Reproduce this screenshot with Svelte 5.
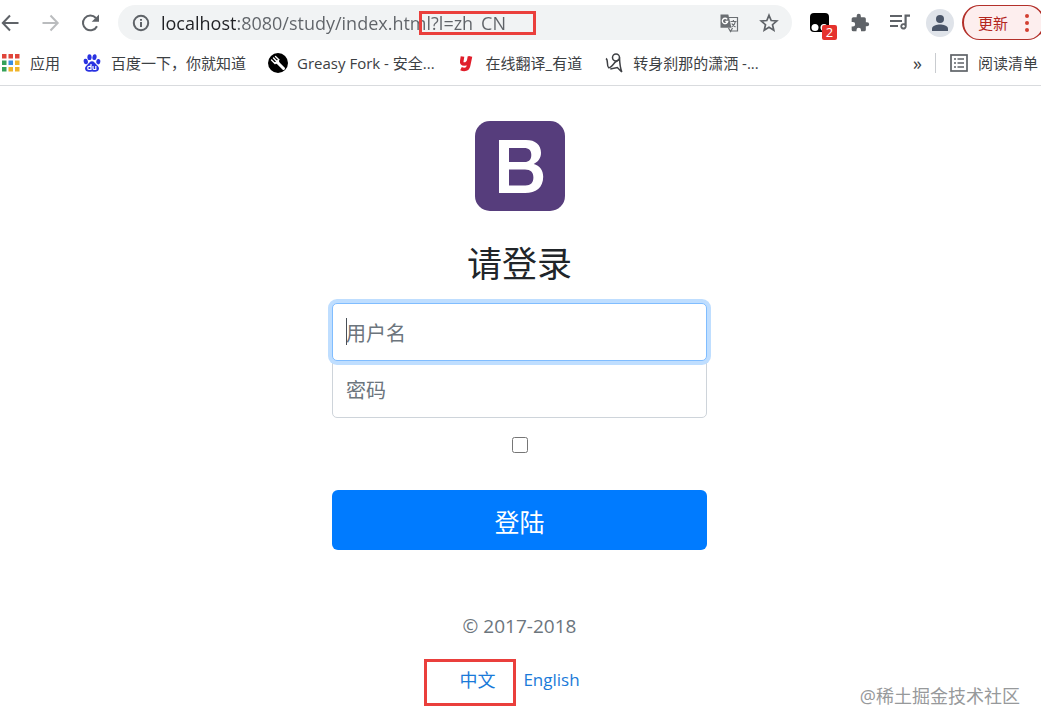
<script lang="ts">
	type Bookmark = { icon: string; title: string };

	const bookmarks: Bookmark[] = [
		{ icon: 'apps', title: '应用' },
		{ icon: 'baidu', title: '百度一下，你就知道' },
		{ icon: 'fork', title: 'Greasy Fork - 安全...' },
		{ icon: 'youdao', title: '在线翻译_有道' },
		{ icon: 'swirl', title: '转身刹那的潇洒 -...' }
	];

	const appColors = [
		'#e0453a', '#e0453a', '#e0453a',
		'#35a15a', '#3b8de0', '#f0b429',
		'#35a15a', '#f0b429', '#f0b429'
	];

	let url = $state('localhost:8080/study/index.html?l=zh_CN');
	let username = $state('');
	let password = $state('');
	let remember = $state(false);
</script>

<svelte:head>
	<title>请登录</title>
</svelte:head>

<header class="browser">
	<div class="toolbar">
		<nav class="history" aria-label="History">
			<button class="icon-button" aria-label="Back">
				<svg viewBox="0 0 20 20" fill="none" stroke="#5f6368" stroke-width="2">
					<path d="M18.500 10H3M10 2.500 2.800 10l7.200 7.500" />
				</svg>
			</button>
			<button class="icon-button" aria-label="Forward">
				<svg viewBox="0 0 20 20" fill="none" stroke="#babcbe" stroke-width="2">
					<path d="M2.500 10H17M10.500 2.500 17.700 10l-7.200 7.500" />
				</svg>
			</button>
			<button class="icon-button" aria-label="Reload">
				<svg viewBox="0 0 20 20">
					<path d="M17 13.200A7.400 7.400 0 1 1 15.900 5" fill="none" stroke="#5f6368" stroke-width="2" />
					<path d="M19 1.500v7.300h-7.300z" fill="#5f6368" />
				</svg>
			</button>
		</nav>

		<div class="omnibox">
			<svg class="info" viewBox="0 0 18 18">
				<circle cx="9" cy="9" r="7.200" fill="none" stroke="#5f6368" stroke-width="2" />
				<path d="M8 8h2v5H8zM8 5h2v1.800H8z" fill="#5f6368" />
			</svg>
			<input class="url" type="text" aria-label="Address" spellcheck="false" bind:value={url} />
			<button class="icon-button" aria-label="Translate">
				<svg viewBox="0 0 20 20">
					<path d="M9 4.500h9.500v13.500H11" fill="#f1f3f4" stroke="#6b6f73" stroke-width="1.200" />
					<path d="M1.500 1.500h7.800l3.200 13.200h-11z" fill="#6b6f73" />
					<path d="M8.200 6.300a2.700 2.700 0 1 0 .500 2.200H6.300" fill="none" stroke="#fff" stroke-width="1.300" />
					<path d="M11.500 8.500h6M14.400 7v1.500M16.400 8.500c-.4 2.500-2 4.300-3.600 5.300M12.800 10.500c1 1.700 2.200 2.700 3.700 3.500M9.500 15l2 3.500 2-3.500" fill="none" stroke="#6b6f73" stroke-width="1.200" />
				</svg>
			</button>
			<button class="icon-button" aria-label="Bookmark this page">
				<svg viewBox="0 0 20 20" fill="none" stroke="#5f6368" stroke-width="1.700">
					<path d="m10 2.300 2.200 5.200 5.600.500-4.300 3.700 1.300 5.500-4.800-2.900-4.800 2.900 1.300-5.500L2.200 8l5.600-.500z" />
				</svg>
			</button>
			<span class="mark mark-url"></span>
		</div>

		<div class="extensions">
			<button class="icon-button tamper" aria-label="Extension">
				<svg viewBox="0 0 20 20">
					<rect x="0" y="0" width="19" height="19" rx="4" />
					<circle cx="5" cy="14.500" r="3.500" fill="#fff" />
					<circle cx="14" cy="14.500" r="3.500" fill="#fff" />
				</svg>
				<span class="badge">2</span>
			</button>
			<button class="icon-button" aria-label="Extensions">
				<svg viewBox="0 0 24 24" fill="#5f6368">
					<path d="M20.500 11H19V7a2 2 0 0 0-2-2h-4V3.500a2.500 2.500 0 0 0-5 0V5H4a2 2 0 0 0-2 2v3.800h1.500a2.700 2.700 0 0 1 0 5.400H2V20a2 2 0 0 0 2 2h3.800v-1.500a2.700 2.700 0 0 1 5.400 0V22H17a2 2 0 0 0 2-2v-4h1.500a2.500 2.500 0 0 0 0-5z" />
				</svg>
			</button>
			<button class="icon-button" aria-label="Media controls">
				<svg viewBox="0 0 20 20" fill="#5f6368">
					<path d="M0 2h12v2H0zM0 7h12v2H0zM0 12h8v2H0zM14.500 1.500H20v2.200h-3.300v9.600a3.200 3.200 0 1 1-2.200-3z" />
					<circle cx="13.500" cy="13.200" r="1.200" fill="#fff" />
				</svg>
			</button>
			<button class="avatar" aria-label="Profile">
				<svg viewBox="0 0 28 28" fill="#4a5568">
					<circle cx="14" cy="10" r="4" />
					<path d="M6 22v-2.500C6 16.700 11 15.500 14 15.500s8 1.200 8 4V22z" />
				</svg>
			</button>
			<button class="update">
				更新
				<svg viewBox="0 0 4 18" fill="#d23f31">
					<circle cx="2" cy="2" r="2" />
					<circle cx="2" cy="9" r="2" />
					<circle cx="2" cy="16" r="2" />
				</svg>
			</button>
		</div>
	</div>

	<nav class="bookmarks" aria-label="Bookmarks">
		{#each bookmarks as { icon, title }}
			<a class="bookmark" href="#{icon}">
				<svg viewBox="0 0 20 20">
					{#if icon === 'apps'}
						{#each appColors as color, i}
							<rect x={1 + (i % 3) * 6.5} y={1 + Math.floor(i / 3) * 6.5} width="4.500" height="4.500" fill={color} />
						{/each}
					{:else if icon === 'baidu'}
						<g fill="#2932e1">
							<ellipse cx="3.800" cy="8.500" rx="2.100" ry="2.800" transform="rotate(-12 3.800 8.500)" />
							<ellipse cx="7.500" cy="4.200" rx="2.100" ry="2.900" />
							<ellipse cx="12.500" cy="4.200" rx="2.100" ry="2.900" transform="rotate(8 12.500 4.200)" />
							<ellipse cx="16.300" cy="8.700" rx="2.100" ry="2.700" transform="rotate(10 16.300 8.700)" />
							<path d="M10 8.300c2.200 0 3 2 4.600 3.500 2 1.700 3 3.200 2 5.300-1.200 2.300-3.800 1.700-6.600 1.400-2.800.300-5.400.900-6.600-1.400-1-2.100 0-3.600 2-5.300C7 10.300 7.800 8.300 10 8.300z" />
						</g>
						<path d="M9 11v5.500H7.300a1.500 1.500 0 0 1 0-3.200H9M11 13v2.200c0 .900.300 1.300 1.200 1.300h1.600V13" fill="none" stroke="#fff" stroke-width="1.200" />
					{:else if icon === 'fork'}
						<circle cx="10" cy="10" r="10" />
						<path d="m9.500 9.500 6 6" stroke="#fff" stroke-width="3" stroke-linecap="round" />
						<path d="M3.500 7 7 10.500l3.800-3.800L7.500 3.500M5.500 5 9 8.700" fill="none" stroke="#fff" stroke-width="1.400" stroke-linecap="round" />
						<path d="m7 10.500 3.800-3.800.800 4.400z" fill="#fff" />
					{:else if icon === 'youdao'}
						<path d="M5.500 3.500 4.800 8c-.4 2.300.7 3 2.300 3 2.500 0 4.300-1.500 4.800-4.300l.600-3.200M13.500 3.500l-2 9.500c-.5 2.600-2 3.500-4.200 3.500-1.300 0-2.300-.3-3.300-.8" fill="none" stroke="#e01e2b" stroke-width="3.600" />
					{:else}
						<g fill="none" stroke="#3f4145" stroke-width="1.500">
							<circle cx="12" cy="4.500" r="3.500" />
							<path d="M2 5.500c2.500 1.500.5 7.500 2.500 9 1.800 1 4.500-2.500 6.500-5.200l4.200-3M15.500 4.500c.2 5 .2 9 2.300 14.500l-4.500-4.500-7 1.500" />
						</g>
					{/if}
				</svg>
				{title}
			</a>
		{/each}

		<button class="more" aria-label="More bookmarks">»</button>
		<span class="divider"></span>
		<button class="bookmark reading">
			<svg viewBox="0 0 20 20">
				<rect x="2" y="2" width="16" height="16" fill="none" stroke="#5f6368" stroke-width="1.700" />
				<path d="M5 6h2M5 10h2M5 14h2M8.500 6H15M8.500 10H15M8.500 14H15" stroke="#5f6368" stroke-width="1.700" />
			</svg>
			阅读清单
		</button>
	</nav>
</header>

<main class="page">
	<form class="signin" onsubmit={(e) => e.preventDefault()}>
		<svg class="logo" viewBox="0 0 90 90" role="img" aria-label="Bootstrap">
			<rect width="90" height="90" rx="15" fill="#563d7c" />
			<path
				fill="#fff"
				fill-rule="evenodd"
				d="M24 19h27c9.500 0 15 4.800 15 12.800 0 5.300-2.800 9.200-7.300 11.200 6 1.500 9.500 6.300 9.500 12.700C68.200 66.500 61 72 50 72H24zM34 27v14h15.500c4.500 0 6.800-2.600 6.800-7s-2.300-7-7.300-7zM34 48.500v16h16.500c5.200 0 7.900-2.900 7.900-8s-2.700-8-8.400-8z"
			/>
		</svg>
		<h1>请登录</h1>

		<div class="field active">
			<input type="text" aria-label="用户名" placeholder="用户名" bind:value={username} />
			<span class="caret"></span>
		</div>
		<div class="field">
			<input type="password" aria-label="密码" placeholder="密码" bind:value={password} />
		</div>

		<input class="remember" type="checkbox" aria-label="Remember me" bind:checked={remember} />
		<button class="submit" type="submit">登陆</button>

		<p class="copyright">© 2017-2018</p>
		<div class="languages">
			<a class="chinese" href="?l=zh_CN">中文<span class="mark mark-lang"></span></a>
			<a class="english" href="?l=en_US">English</a>
		</div>
	</form>
</main>

<span class="watermark">@稀土掘金技术社区</span>

<style>
	:global(body) {
		margin: 0;
		background: #fff;
		color: #212529;
		font-family: 'Open Sans', 'Noto Sans CJK SC', sans-serif;
		overflow: hidden;
	}

	:global(#app) {
		position: relative;
		display: flex;
		flex-direction: column;
		min-height: 100vh;
	}

	button {
		padding: 0;
		border: 0;
		background: none;
		color: inherit;
		font: inherit;
		cursor: pointer;
	}

	a {
		text-decoration: none;
	}

	svg {
		display: block;
		flex: none;
	}

	.browser {
		border-bottom: 1px solid #d9dbde;
		color: #3c4043;
		font-size: 15px;
	}

	.toolbar {
		display: flex;
		align-items: center;
		height: 45px;
	}

	.history {
		display: flex;
		gap: 20px;
	}

	.icon-button,
	.icon-button svg {
		width: 20px;
		height: 20px;
	}

	.omnibox {
		position: relative;
		display: flex;
		flex: 1;
		align-items: center;
		gap: 20px;
		min-width: 0;
		height: 35px;
		margin: 0 18px;
		padding: 0 13px 0 14px;
		box-sizing: border-box;
		border-radius: 18px;
		background: #f1f3f4;
	}

	.info {
		width: 18px;
		height: 18px;
	}

	.url {
		flex: 1;
		min-width: 0;
		margin-left: -9px;
		padding: 0;
		border: 0;
		outline: 0;
		background: linear-gradient(90deg, #202124 76px, #5f6368 76px);
		background-clip: text;
		-webkit-text-fill-color: transparent;
		font: 18px/26px 'Open Sans', sans-serif;
	}

	.mark {
		position: absolute;
		box-sizing: border-box;
		border: 3px solid #ea3f3c;
		pointer-events: none;
	}

	.mark-url {
		top: 6px;
		left: 301px;
		width: 117px;
		height: 24px;
	}

	.extensions {
		display: flex;
		align-items: center;
		gap: 20px;
		margin-right: -4px;
	}

	.tamper {
		position: relative;
	}

	.badge {
		position: absolute;
		top: 12px;
		left: 12px;
		width: 15px;
		height: 15px;
		border-radius: 2px;
		background: #e5322d;
		color: #fff;
		font-size: 13px;
		line-height: 15px;
	}

	.avatar {
		width: 28px;
		height: 28px;
		margin: 0 -12px 0 -4px;
		border-radius: 50%;
		background: #dfe3e9;
	}

	.update {
		display: flex;
		align-items: center;
		gap: 17px;
		height: 35px;
		padding: 0 14px;
		border: 1px solid #b3302a;
		border-width: 1px 2px;
		border-radius: 18px;
		background: #fdeeee;
		color: #b3261e;
	}

	.update svg {
		width: 4px;
		height: 18px;
	}

	.bookmarks {
		display: flex;
		align-items: center;
		gap: 22px;
		height: 40px;
		padding: 0 3px 5px 1px;
		box-sizing: border-box;
		white-space: nowrap;
	}

	.bookmark {
		display: flex;
		align-items: center;
		gap: 9px;
		color: #3c4043;
	}

	.bookmark svg {
		width: 20px;
		height: 20px;
	}

	.more {
		margin-left: auto;
		font-size: 18px;
		line-height: 20px;
	}

	.divider {
		width: 1px;
		height: 20px;
		margin: 0 -9px;
		background: #c9ccd0;
	}

	.page {
		display: flex;
		justify-content: center;
		padding: 35px 17px 0 15px;
	}

	.signin {
		display: flex;
		flex-direction: column;
		align-items: center;
		width: 100%;
		max-width: 375px;
	}

	.logo {
		width: 90px;
		height: 90px;
	}

	h1 {
		margin: 32px 0 18px;
		font-size: 35px;
		font-weight: 400;
		line-height: 42px;
	}

	.field {
		position: relative;
		width: 100%;
		margin-bottom: -1px;
	}

	.field input {
		display: block;
		width: 100%;
		height: 58px;
		padding: 2px 13px 0;
		box-sizing: border-box;
		border: 1px solid #ced4da;
		border-radius: 0 0 5px 5px;
		outline: 0;
		background: #fff;
		color: #495057;
		font: 20px/30px 'Open Sans', 'Noto Sans CJK SC', sans-serif;
	}

	.field input::placeholder {
		color: #6c757d;
		opacity: 1;
	}

	.active {
		z-index: 1;
	}

	.active input {
		border-color: #80bdff;
		border-radius: 5px;
		box-shadow: 0 0 0 4px #bfdeff;
		caret-color: transparent;
	}

	.caret {
		position: absolute;
		top: 15px;
		left: 14px;
		width: 1px;
		height: 27px;
		background: #495057;
	}

	.remember {
		width: 16px;
		height: 16px;
		margin: 20px 0 37px;
	}

	.submit {
		width: 100%;
		height: 60px;
		padding-top: 2px;
		border-radius: 6px;
		background: #007bff;
		color: #fff;
		font-size: 25px;
	}

	.copyright {
		margin: 61px 0 25px;
		color: #6c757d;
		font-size: 19px;
		line-height: 30px;
	}

	.languages {
		display: flex;
		gap: 28px;
		font-size: 18px;
		line-height: 28px;
	}

	.languages a {
		color: #1a7ad9;
	}

	.chinese {
		position: relative;
	}

	.english {
		font-size: 17px;
	}

	.mark-lang {
		top: -7px;
		left: -35px;
		width: 92px;
		height: 47px;
	}

	.watermark {
		position: absolute;
		right: 21px;
		bottom: 19px;
		color: #97999b;
		font-size: 18px;
		line-height: 26px;
	}
</style>
